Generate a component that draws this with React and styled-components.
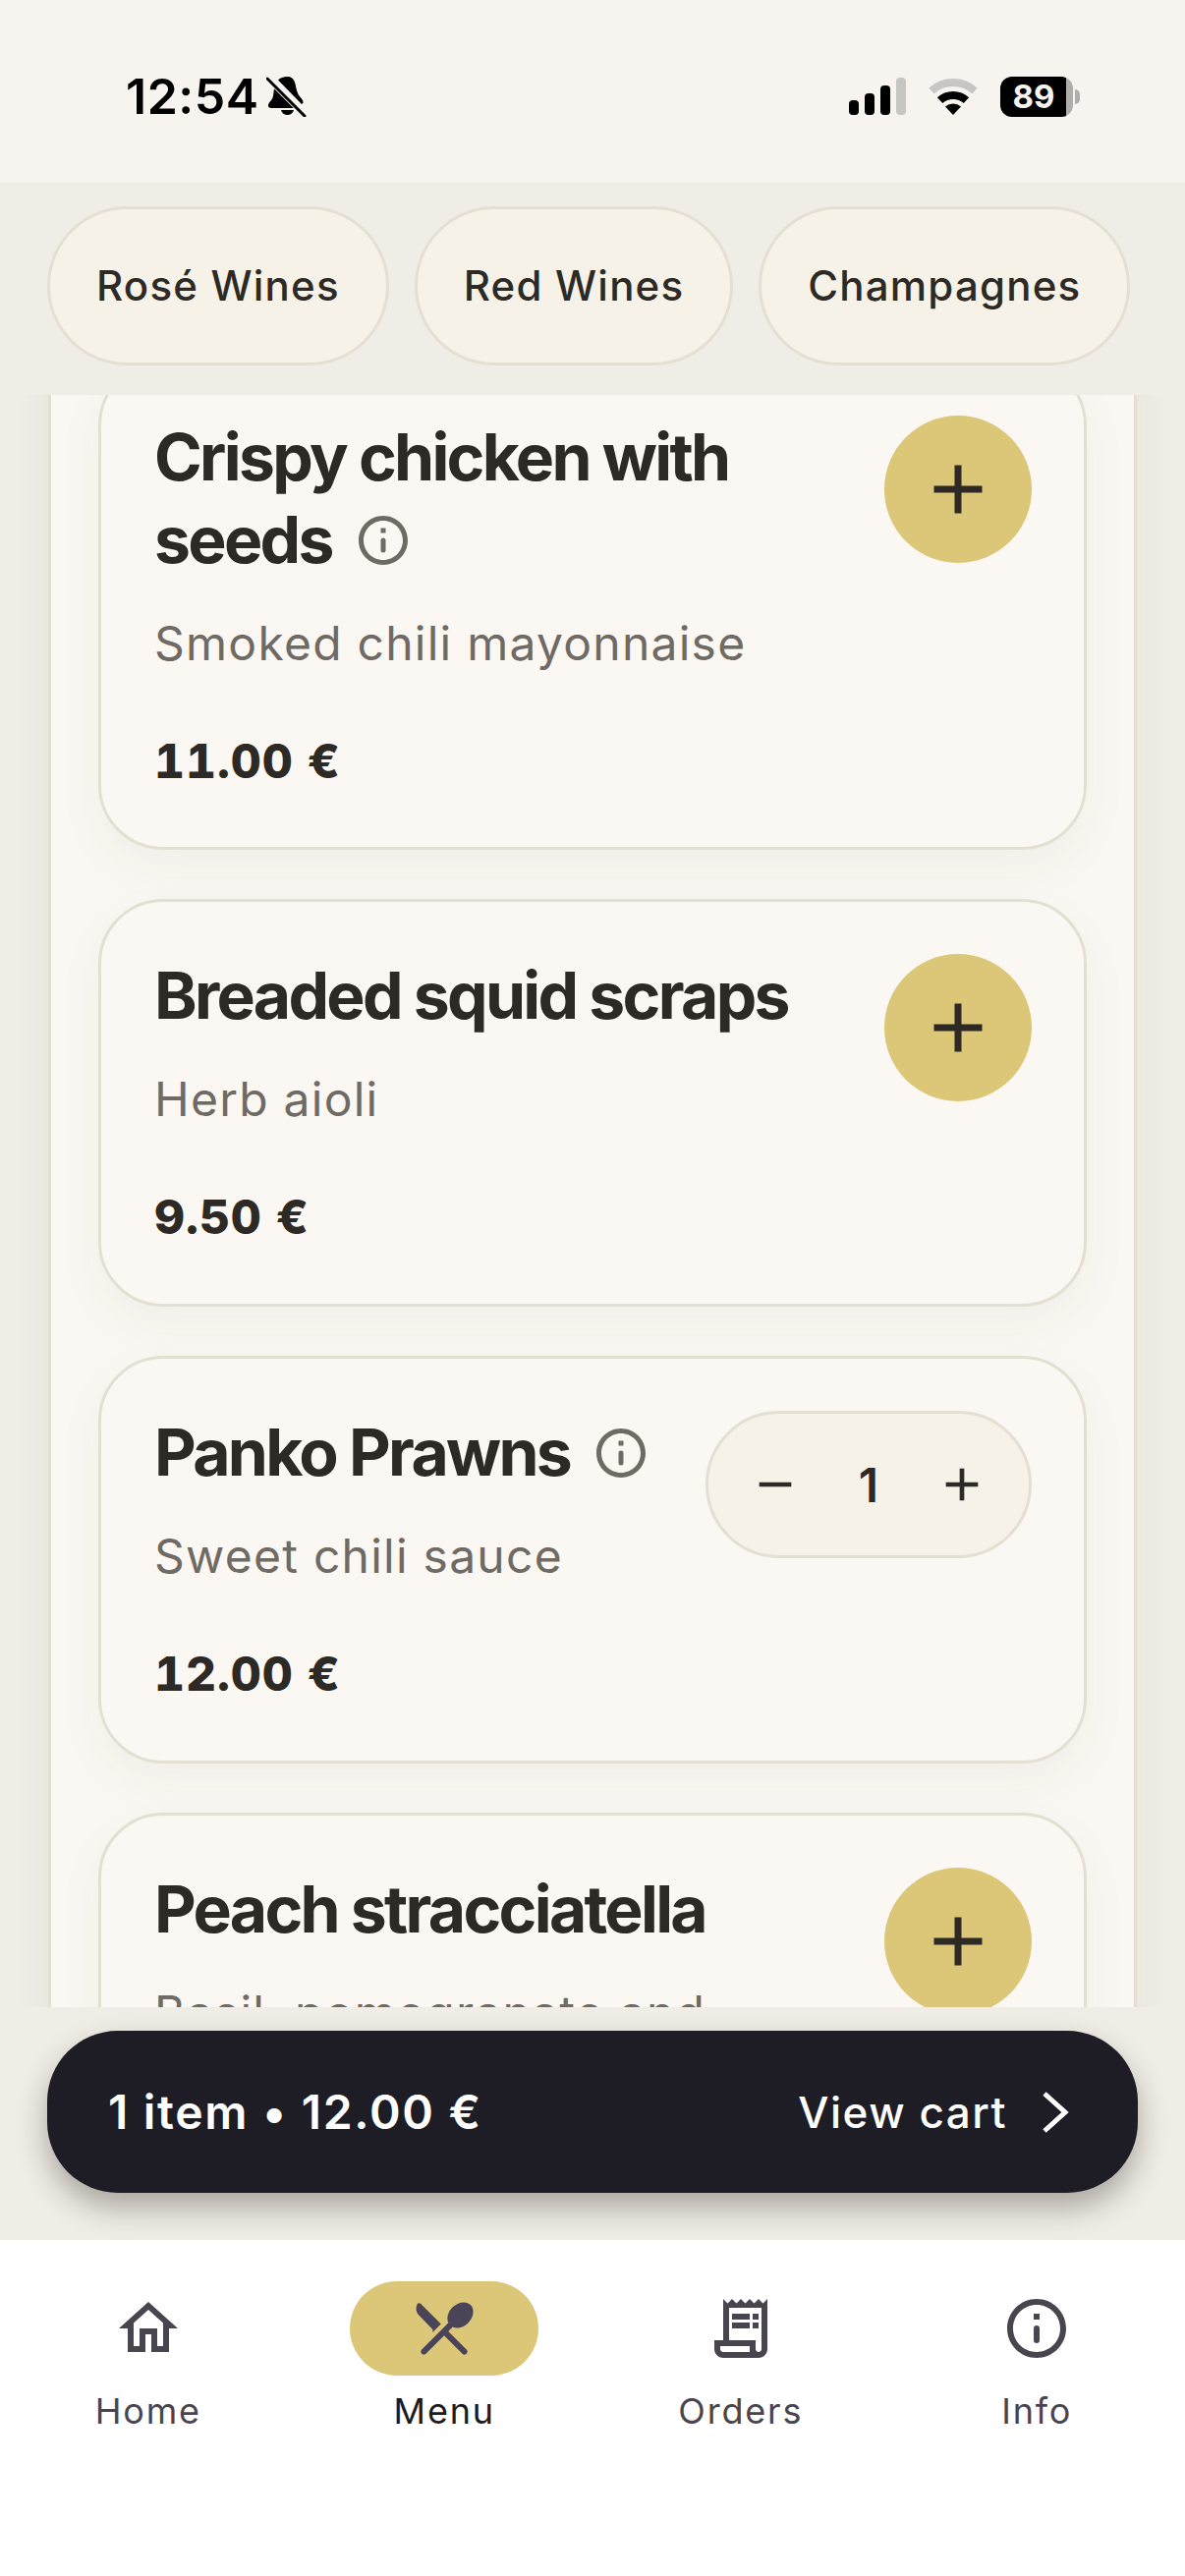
import React from 'react';
import styled, { createGlobalStyle } from 'styled-components';
import { MdAdd, MdRemove, MdOutlineHome, MdOutlineReceiptLong } from 'react-icons/md';

const GlobalStyle = createGlobalStyle`
  html, body {
    margin: 0;
    padding: 0;
    background: #f0ede6;
  }
  * {
    box-sizing: border-box;
  }
`;

const Page = styled.div`
  width: 1206px;
  height: 2622px;
  display: flex;
  flex-direction: column;
  overflow: hidden;
  font-family: Inter, 'Noto Sans', sans-serif;
  background: #f0ede6;
`;

const StatusBar = styled.div`
  height: 186px;
  flex: none;
  background: #f7f4ef;
  display: flex;
  justify-content: space-between;
  align-items: flex-start;
  padding: 71px 106px 0 128px;
  color: #000;
`;

const StatusGroup = styled.div`
  display: flex;
  align-items: center;
  gap: ${(p) => p.$gap}px;
  height: 54px;
`;

const Time = styled.span`
  font-size: 50px;
  font-weight: 600;
  line-height: 54px;
  letter-spacing: 0.5px;
`;

const Battery = styled.div`
  position: relative;
  width: 74px;
  height: 41px;
  border-radius: 12px;
  background: linear-gradient(90deg, #000 90%, #b0aeaa 90%);
  color: #f7f4ef;
  font-size: 33px;
  font-weight: 700;
  line-height: 41px;
  text-align: center;
  padding-right: 6px;
  margin-right: 8px;

  &::after {
    content: '';
    position: absolute;
    top: 13px;
    right: -7px;
    width: 5px;
    height: 15px;
    border-radius: 0 6px 6px 0;
    background: #b0aeaa;
  }
`;

const CategoryBar = styled.div`
  height: 216px;
  flex: none;
  display: flex;
  gap: 26px;
  padding: 24px 0 0 48px;
  background: #f0ede6;
  position: relative;
  z-index: 2;
`;

const CategoryPill = styled.div`
  height: 162px;
  padding: 0 47px;
  border-radius: 81px;
  border: 3px solid #e5dfd3;
  background: #f6f2e7;
  color: #2d2a26;
  font-size: 42px;
  font-weight: 500;
  letter-spacing: 1.2px;
  line-height: 156px;
  white-space: nowrap;
`;

const Content = styled.div`
  flex: 1;
  min-height: 0;
  overflow: hidden;
`;

const Panel = styled.div`
  margin: -35px 49px 0;
  padding: 0 48px 60px;
  display: flex;
  flex-direction: column;
  gap: 50px;
  background: #fbf8f3;
  border-left: 3px solid #e5dfd3;
  border-right: 3px solid #e5dfd3;
  box-shadow: 0 0 40px rgba(60, 50, 30, 0.05);
`;

const Card = styled.div`
  min-height: 415px;
  display: flex;
  justify-content: space-between;
  align-items: flex-start;
  gap: 24px;
  padding: 53px 53px 51px 54px;
  border: 3px solid #e5dfd3;
  border-radius: 66px;
  background: #fbf8f3;
  box-shadow: 0 18px 48px rgba(60, 50, 30, 0.05);
`;

const CardText = styled.div`
  flex: 1;
  min-width: 0;
`;

const Title = styled.div`
  font-size: 66px;
  font-weight: 700;
  line-height: 84px;
  letter-spacing: -2.7px;
  color: #2d2a26;
`;

const TitleInfo = styled.svg`
  display: inline-block;
  width: 60px;
  height: 60px;
  vertical-align: -7px;
  margin-left: 22px;
  color: #6f6a63;
`;

const Description = styled.div`
  margin-top: 34px;
  font-size: 48px;
  line-height: 60px;
  letter-spacing: 1.25px;
  color: #6f6a63;
`;

const Price = styled.div`
  margin-top: 54px;
  font-size: 48px;
  font-weight: 800;
  line-height: 72px;
  letter-spacing: 1px;
  font-variant-numeric: tabular-nums;
  color: #2d2a26;
`;

const AddButton = styled.div`
  width: 150px;
  height: 150px;
  flex: none;
  border-radius: 50%;
  background: #dcc677;
  color: #2d2a26;
  display: flex;
  align-items: center;
  justify-content: center;
`;

const Stepper = styled.div`
  width: 332px;
  height: 150px;
  flex: none;
  border-radius: 75px;
  border: 3px solid #e5dfd3;
  background: #f6f2e7;
  color: #2d2a26;
  display: flex;
  align-items: center;
  justify-content: space-between;
  padding: 0 40px;
`;

const StepperCount = styled.span`
  font-size: 48px;
  font-weight: 600;
`;

const CartBar = styled.div`
  height: 237px;
  flex: none;
  padding: 24px 48px 0;
  background: #f0ede6;
  position: relative;
  z-index: 2;
`;

const CartButton = styled.div`
  height: 165px;
  border-radius: 72px;
  background: #1e1c25;
  color: #fff;
  display: flex;
  align-items: center;
  justify-content: space-between;
  padding: 0 70px 0 62px;
  box-shadow: 0 15px 30px rgba(40, 35, 25, 0.35);
`;

const CartSummary = styled.span`
  font-size: 48px;
  font-weight: 600;
  letter-spacing: 1.7px;
`;

const CartAction = styled.span`
  display: flex;
  align-items: center;
  gap: 33px;
  font-size: 44px;
  font-weight: 500;
  letter-spacing: 1.5px;
`;

const BottomNav = styled.div`
  height: 342px;
  flex: none;
  display: grid;
  grid-template-columns: repeat(4, 1fr);
  padding-top: 42px;
  background: #fff;
  position: relative;
  z-index: 2;
`;

const NavItem = styled.div`
  display: flex;
  flex-direction: column;
  align-items: center;
  gap: 9px;
`;

const NavIcon = styled.div`
  width: 192px;
  height: 96px;
  border-radius: 48px;
  background: ${(p) => (p.$active ? '#dcc677' : 'transparent')};
  color: ${(p) => (p.$active ? '#4a4458' : '#49454f')};
  display: flex;
  align-items: center;
  justify-content: center;
`;

const NavLabel = styled.span`
  font-size: 36px;
  line-height: 54px;
  font-weight: 400;
  letter-spacing: 1.8px;
  color: ${(p) => (p.$active ? '#1d1b20' : '#49454f')};
`;

const infoPath =
  'M11 7h2v2h-2zM11 12a1 1 0 0 1 2 0v4a1 1 0 0 1-2 0zM12 2C6.480 2 2 6.480 2 12s4.480 10 10 10 10-4.480 10-10S17.520 2 12 2zm0 18c-4.410 0-8-3.590-8-8s3.590-8 8-8 8 3.590 8 8-3.590 8-8 8z';

const InfoIcon = ({ size }) => (
  <svg width={size} height={size} viewBox="0 0 24 24" fill="currentColor">
    <path d={infoPath} />
  </svg>
);

const CutleryIcon = ({ size }) => (
  <svg width={size} height={size} viewBox="0 0 24 24" fill="currentColor">
    <path d="M8.100 13.340l2.830-2.830-6.900-6.890c-.35-.35-.96-.26-1.180.19-.59 1.220-.37 2.750.66 3.780l4.590 4.750z" />
    <path d="M14.880 11.530c1.530.71 3.680.21 5.270-1.380 1.910-1.910 2.280-4.650.81-6.120-1.460-1.460-4.200-1.100-6.120.81-1.590 1.590-2.090 3.740-1.380 5.270l-9.050 9.050c-.39.39-.39 1.020 0 1.410.39.39 1.020.39 1.410 0L12 14.410l6.180 6.180c.39.39 1.020.39 1.410 0 .39-.39.39-1.020 0-1.410L13.410 13l1.470-1.470z" />
  </svg>
);

const BellOffIcon = () => (
  <svg width="42" height="42" viewBox="0 0 42 42" fill="#000">
    <path d="M22 1c3 0 5 1.500 6.500 4.500 2 4 1.500 9 4 13.500 1.500 3 5 5 5 8 0 1-.5 1.500-1.500 2L12 4.500C14 2.500 17 1 22 1z" />
    <path d="M8 13 28 33H5c-2 0-3-1-3-2.500 0-3 3-4.500 4.500-8C7.500 19.500 7.500 16 8 13z" />
    <path d="M15 35h13c-1 3.500-3.500 5-6.500 5S16 38.500 15 35z" />
    <path d="M2 2 40 40" stroke="#f7f4ef" strokeWidth="7" />
    <path d="M1 3 39 41" stroke="#000" strokeWidth="3" strokeLinecap="round" />
  </svg>
);

const SignalIcon = () => (
  <svg width="58" height="38" viewBox="0 0 58 38">
    <rect x="0" y="23" width="10" height="15" rx="4" fill="#000" />
    <rect x="16" y="16" width="10" height="22" rx="4" fill="#000" />
    <rect x="32" y="8" width="10" height="30" rx="4" fill="#000" />
    <rect x="48" y="0" width="10" height="38" rx="4" fill="#c8c6c2" />
  </svg>
);

const WifiIcon = () => (
  <svg width="60" height="38" viewBox="0 0 60 38">
    <path d="M8 13.500A33 33 0 0 1 52 13.500" fill="none" stroke="#c8c6c2" strokeWidth="8" />
    <path d="M16.600 23.100A20 20 0 0 1 43.400 23.100" fill="none" stroke="#000" strokeWidth="8" />
    <path d="M30 38 22 29.500A12 12 0 0 1 38 29.500Z" fill="#000" />
  </svg>
);

const CartChevron = () => (
  <svg width="30" height="44" viewBox="0 0 30 44" fill="none">
    <path d="M5 3 26 22 5 41" stroke="#fff" strokeWidth="5" />
  </svg>
);

const menuItems = [
  { id: 1, title: 'Crispy chicken with seeds', info: true, description: 'Smoked chili mayonnaise', price: '11.00 €' },
  { id: 2, title: 'Breaded squid scraps', description: 'Herb aioli', price: '9.50 €' },
  { id: 3, title: 'Panko Prawns', info: true, description: 'Sweet chili sauce', price: '12.00 €', quantity: 1 },
  { id: 4, title: 'Peach stracciatella', description: 'Basil, pomegranate and' },
];

const categories = ['Rosé Wines', 'Red Wines', 'Champagnes'];

const navItems = [
  { label: 'Home', icon: <MdOutlineHome size={72} /> },
  { label: 'Menu', icon: <CutleryIcon size={72} />, active: true },
  { label: 'Orders', icon: <MdOutlineReceiptLong size={72} /> },
  { label: 'Info', icon: <InfoIcon size={72} /> },
];

const App = () => (
  <>
    <GlobalStyle />
    <Page>
      <StatusBar>
        <StatusGroup $gap={8}>
          <Time>12:54</Time>
          <BellOffIcon />
        </StatusGroup>
        <StatusGroup $gap={18}>
          <SignalIcon />
          <WifiIcon />
          <Battery>89</Battery>
        </StatusGroup>
      </StatusBar>

      <CategoryBar>
        {categories.map((name) => (
          <CategoryPill key={name}>{name}</CategoryPill>
        ))}
      </CategoryBar>

      <Content>
        <Panel>
          {menuItems.map((item) => (
            <Card key={item.id}>
              <CardText>
                <Title>
                  {item.title}
                  {item.info && (
                    <TitleInfo viewBox="0 0 24 24" fill="currentColor">
                      <path d={infoPath} />
                    </TitleInfo>
                  )}
                </Title>
                <Description>{item.description}</Description>
                {item.price && <Price>{item.price}</Price>}
              </CardText>
              {item.quantity ? (
                <Stepper>
                  <MdRemove size={56} />
                  <StepperCount>{item.quantity}</StepperCount>
                  <MdAdd size={56} />
                </Stepper>
              ) : (
                <AddButton>
                  <MdAdd size={84} />
                </AddButton>
              )}
            </Card>
          ))}
        </Panel>
      </Content>

      <CartBar>
        <CartButton>
          <CartSummary>1 item • 12.00 €</CartSummary>
          <CartAction>
            View cart
            <CartChevron />
          </CartAction>
        </CartButton>
      </CartBar>

      <BottomNav>
        {navItems.map(({ label, icon, active }) => (
          <NavItem key={label}>
            <NavIcon $active={active}>{icon}</NavIcon>
            <NavLabel $active={active}>{label}</NavLabel>
          </NavItem>
        ))}
      </BottomNav>
    </Page>
  </>
);

export default App;
